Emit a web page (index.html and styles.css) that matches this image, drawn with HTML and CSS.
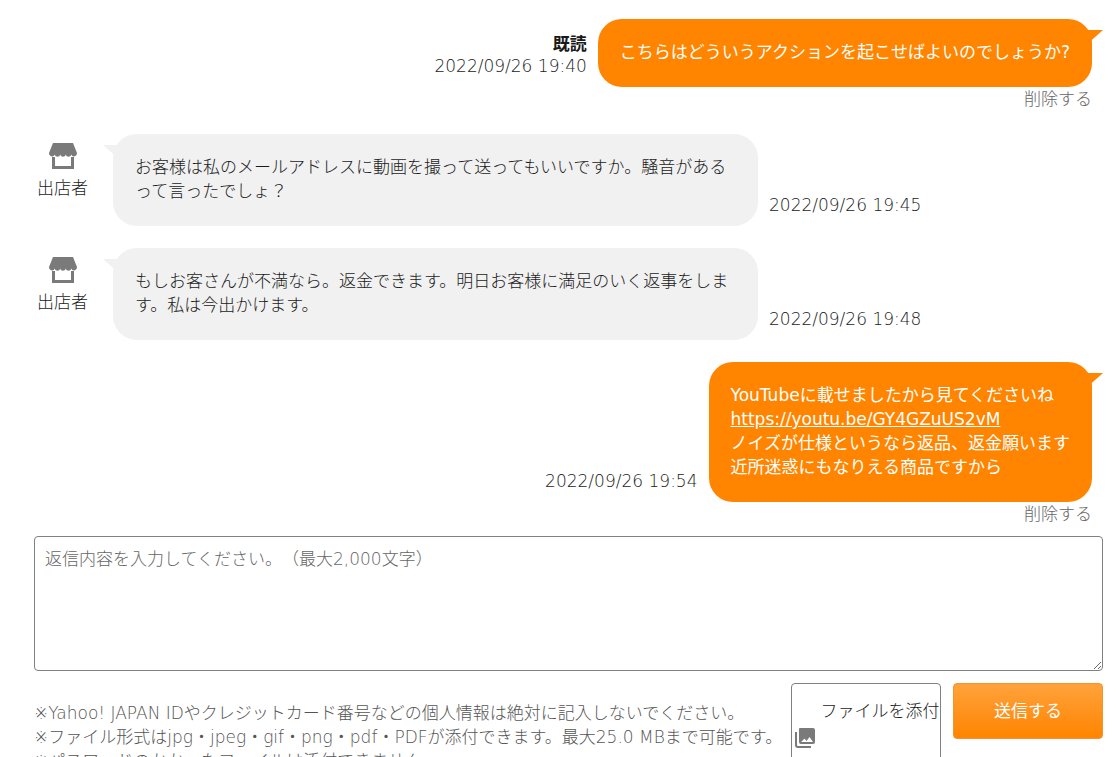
FILE: index.html
```html
<!DOCTYPE html>
<html lang="ja">
	<head>
		<meta charset="utf-8">
		<meta name="viewport" content="width=device-width, initial-scale=1">
		<title></title>
		<link rel="stylesheet" href="styles.css">
	</head>

	<body>
		<svg class="sprite" aria-hidden="true">
			<symbol id="shop" viewBox="0 0 28 28">
				<path fill="#7a7a7a" d="M4 1h20l4 10c0 4-5 4.500-5.700 1.500c-.8 3-4.800 3-5.500 0c-.8 3-4.800 3-5.600 0c-.7 3-4.700 3-5.500 0C5 15.500 0 15 0 11z"/>
				<path fill="none" stroke="#7a7a7a" stroke-width="3" d="M4.500 15v10.500h19V15"/>
			</symbol>
		</svg>

		<div class="talk">
			<div class="msg mine">
				<div class="time"><b>既読</b><br>2022/09/26 19:40</div>
				<div class="bubble">こちらはどういうアクションを起こせばよいのでしょうか?</div>
			</div>
			<a class="del" href="#">削除する</a>

			<div class="msg">
				<div class="shop">
					<svg class="shop-icon" aria-hidden="true"><use href="#shop"/></svg>
					<span>出店者</span>
				</div>
				<div class="bubble">お客様は私のメールアドレスに動画を撮って送ってもいいですか。騒音があるって言ったでしょ？</div>
				<div class="time">2022/09/26 19:45</div>
			</div>

			<div class="msg">
				<div class="shop">
					<svg class="shop-icon" aria-hidden="true"><use href="#shop"/></svg>
					<span>出店者</span>
				</div>
				<div class="bubble">もしお客さんが不満なら。返金できます。明日お客様に満足のいく返事をします。私は今出かけます。</div>
				<div class="time">2022/09/26 19:48</div>
			</div>

			<div class="msg mine">
				<div class="time">2022/09/26 19:54</div>
				<div class="bubble">YouTubeに載せましたから見てくださいね<br><a href="https://youtu.be/GY4GZuUS2vM">https://youtu.be/GY4GZuUS2vM</a><br>ノイズが仕様というなら返品、返金願います<br>近所迷惑にもなりえる商品ですから</div>
			</div>
			<a class="del" href="#">削除する</a>
		</div>

		<form class="reply">
			<textarea class="reply-text" aria-label="返信内容" placeholder="返信内容を入力してください。（最大2,000文字）"></textarea>
			<div class="reply-foot">
				<p class="notes">
					※Yahoo! JAPAN IDやクレジットカード番号などの個人情報は絶対に記入しないでください。<br>
					※ファイル形式はjpg・jpeg・gif・png・pdf・PDFが添付できます。最大25.0 MBまで可能です。<br>
					※パスワードのかかったファイルは添付できません。
				</p>
				<label class="attach">
					<input class="attach-file" type="file">
					<svg class="attach-icon" viewBox="0 0 22 22" aria-hidden="true">
						<path fill="none" stroke="#7a7a7a" stroke-width="2" d="M2 5v13q0 2 2 2h13"/>
						<path fill="#7a7a7a" fill-rule="evenodd" d="M6 1h13q2 0 2 2v12q0 2-2 2H7q-2 0-2-2V2q0-1 1-1zM7 15h12l-3.500-5l-3 4l-2-2.500z"/>
					</svg>
					<span>ファイルを添付する</span>
				</label>
				<button class="send" type="submit">送信する</button>
			</div>
		</form>
	</body>
</html>
```

FILE: styles.css
```css
*{
	box-sizing: border-box;
}
body{
	margin: 0;
	padding: 19px 17px 0 34px;
	background: #fff;
	color: #1a1a1a;
	font: 300 17px/24px "DejaVu Sans", "Noto Sans CJK JP", sans-serif;
	text-spacing-trim: space-all;
}
b{
	font-weight: 700;
}
.sprite{
	display: none;
}

/* messages */
.msg{
	display: flex;
	align-items: flex-end;
	margin-bottom: 22px;
}
.mine{
	justify-content: flex-end;
	margin: 0 11px 0 0;
}
.bubble{
	position: relative;
	max-width: 645px;
	padding: 21px 22px 23px;
	border-radius: 24px;
	background: #f1f1f1;
}
.bubble:before{
	content: "";
	position: absolute;
	top: 11px;
	left: -10px;
	width: 18px;
	height: 16px;
	background: #f1f1f1;
	clip-path: polygon(0 0, 100% 0, 100% 100%);
}
.mine .bubble{
	background: #ff8400;
	color: #fff;
	font-weight: 400;
}
.mine .bubble:before{
	left: auto;
	right: -11px;
	background: #ff8400;
	clip-path: polygon(0 0, 100% 0, 0 100%);
}
.bubble a{
	color: #fff;
}
.time{
	flex: none;
	margin: 0 11px 10px;
	line-height: 22px;
	text-align: right;
}
.del{
	display: block;
	width: fit-content;
	margin: 0 11px 23px auto;
	color: #666;
	text-decoration: none;
}
.talk .del:last-child{
	margin-bottom: 10px;
}
.shop{
	flex: none;
	align-self: flex-start;
	width: 57px;
	margin-right: 22px;
	padding-top: 8px;
	text-align: center;
}
.shop-icon{
	display: block;
	width: 28px;
	height: 28px;
	margin: 0 auto 6px;
}

/* reply form */
.reply-text{
	display: block;
	width: 100%;
	height: 135px;
	padding: 10px;
	border: 1px solid #808080;
	border-radius: 4px;
	color: #333;
	font: inherit;
	text-spacing-trim: space-all;
	resize: vertical;
}
.reply-text::placeholder{
	color: #666;
}
.reply-foot{
	display: flex;
	align-items: flex-start;
	gap: 12px;
	margin-top: 12px;
}
.notes{
	flex: 1;
	min-width: 0;
	margin: 0;
	padding-top: 18px;
	color: #555;
	white-space: nowrap;
}
.attach{
	display: flex;
	flex: none;
	align-items: center;
	width: 150px;
	padding-left: 2px;
	border: 1px solid #808080;
	border-radius: 4px;
	line-height: 54px;
	text-align: center;
	cursor: pointer;
}
.attach span{
	flex: 1;
	margin-left: 4px;
}
.attach-file{
	position: absolute;
	width: 1px;
	height: 1px;
	opacity: 0;
}
.attach-icon{
	flex: none;
	width: 22px;
	height: 22px;
}
.send{
	flex: none;
	width: 150px;
	height: 56px;
	border: 1px solid #f5932a;
	border-radius: 4px;
	background: linear-gradient(#ffa23c, #ff8400);
	color: #fff;
	font: inherit;
	font-weight: 400;
	cursor: pointer;
}
```
